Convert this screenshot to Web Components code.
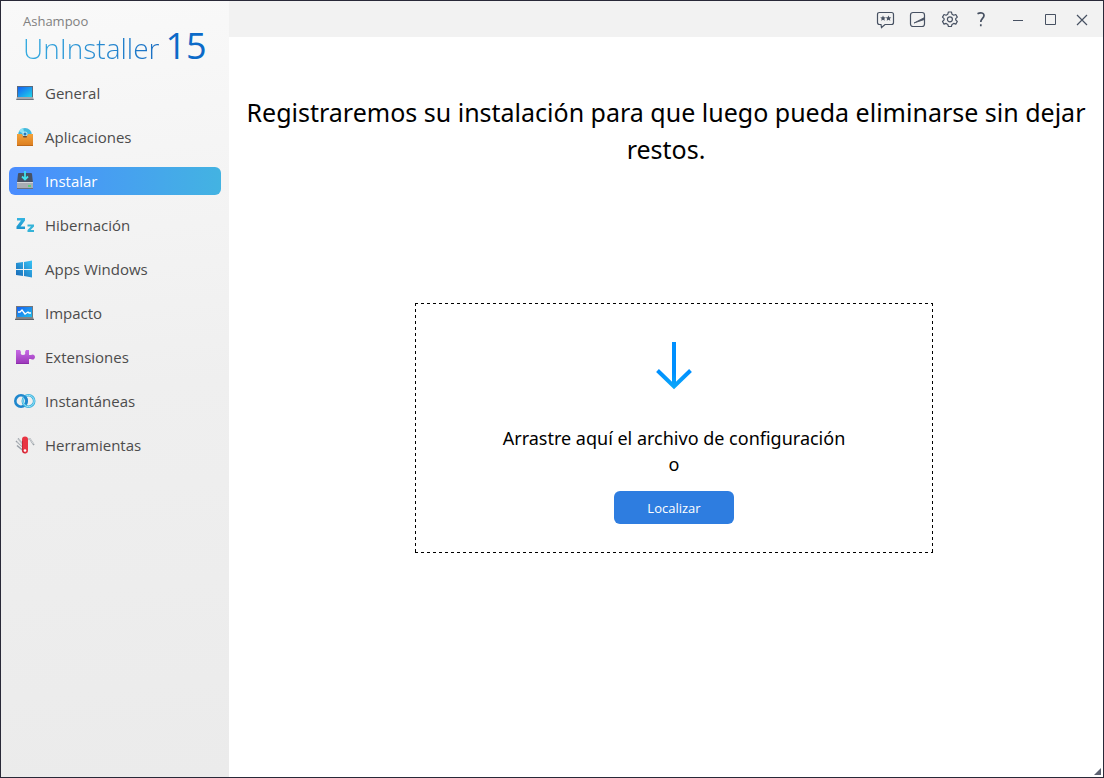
<!DOCTYPE html>
<html lang="es">
<head>
<meta charset="utf-8">
<meta name="viewport" content="width=device-width, initial-scale=1">
<title>Ashampoo UnInstaller 15</title>
<style>
  body {
    margin: 0;
    font-family: "Noto Sans", "Open Sans", sans-serif;
    color: #000;
  }
</style>
</head>
<body>
<app-window>
  <side-bar slot="side">
    <app-logo slot="logo"></app-logo>
    <nav-item icon="laptop">General</nav-item>
    <nav-item icon="bag">Aplicaciones</nav-item>
    <nav-item icon="drive" active>Instalar</nav-item>
    <nav-item icon="sleep">Hibernación</nav-item>
    <nav-item icon="windows">Apps Windows</nav-item>
    <nav-item icon="impact">Impacto</nav-item>
    <nav-item icon="puzzle">Extensiones</nav-item>
    <nav-item icon="rings">Instantáneas</nav-item>
    <nav-item icon="knife">Herramientas</nav-item>
  </side-bar>
  <title-bar slot="title"></title-bar>
  <page-heading>Registraremos su instalación para que luego pueda eliminarse sin dejar restos.</page-heading>
  <drop-zone action="Localizar">
    <span>Arrastre aquí el archivo de configuración</span>
    <span>o</span>
  </drop-zone>
</app-window>

<script>
const icons = {
  laptop: `
    <defs><linearGradient id="g" x2="1" y2="1"><stop stop-color="#1460f5"/><stop offset="1" stop-color="#20d5e8"/></linearGradient></defs>
    <rect x="2" y="3" width="16" height="12" fill="#596b80"/>
    <rect x="3" y="4" width="14" height="10" fill="url(#g)"/>
    <path d="M2 14h16l1 3H1z" fill="#a3a7ae"/><path d="M1 16h18l-1 1H2z" fill="#6d737c"/>`,
  bag: `
    <defs><linearGradient id="g" y2="1" x2="0"><stop stop-color="#f2a33d"/><stop offset="1" stop-color="#dc7d1e"/></linearGradient></defs>
    <circle cx="10" cy="8" r="7" fill="#42b8dc"/><path d="M10 8 4 4a7 7 0 0 1 4-3z" fill="#8de3f3"/>
    <circle cx="10" cy="7" r="2.500" fill="#b8ebf5"/><circle cx="10" cy="7" r="1.500" fill="#2878b6"/>
    <path d="M2 7h5q0 2 3 2t3-2h5v12H2z" fill="url(#g)"/><path d="M2 18h16v1H2z" fill="#be691a"/>
    <rect x="8" y="9" width="4" height="1.500" rx=".7" fill="#6d4b35"/>`,
  drive: `
    <path d="M4 2h12q1 0 1 1l1 9H2l1-9q0-1 1-1z" fill="#475264"/><path d="M2 11h16v6H2z" fill="#a9adb3"/>
    <path d="M2 11h16v1H2z" fill="#d3d5d8"/><path d="M2 17h16v1H2z" fill="#6b717c"/>
    <path d="M13 15h3" stroke="#47da65" stroke-width="1.500"/>
    <path d="M10 0v8M7 5.500l3 3 3-3" fill="none" stroke="#40e1ee" stroke-width="1.800"/>`,
  sleep: `
    <defs><linearGradient id="g" y2="1" x2="0"><stop stop-color="#35b5e2"/><stop offset="1" stop-color="#1b93cc"/></linearGradient></defs>
    <path d="M2 3h8v2.500L5.500 11.500H10V14H1.500v-2.500L6 5.500H2z" fill="url(#g)"/>
    <path d="M12.500 9.500H19v2L15.500 15H19v2h-6.500v-2l3.500-3.500h-3.500z" fill="#35b3d8"/>`,
  windows: `
    <defs><linearGradient id="g" x1="0" y1="1" x2="1" y2="0"><stop stop-color="#1766b5"/><stop offset="1" stop-color="#37c4f6"/></linearGradient></defs>
    <path d="M1 4l7-1v7H1zM9 3l8-1.500V10H9zM1 11h7v6l-7-1zM9 11h8v7.500L9 17z" fill="url(#g)"/>`,
  impact: `
    <defs><linearGradient id="g" x2="1" y2="1"><stop stop-color="#1460f5"/><stop offset="1" stop-color="#20bde8"/></linearGradient></defs>
    <rect x="1" y="3" width="17" height="12" fill="#73777d"/><rect x="2" y="4" width="15" height="10" fill="url(#g)"/>
    <path d="M3 9h2l2-2 3 4 3-2 1 1h2" fill="none" stroke="#fff" stroke-width="1.300"/>
    <path d="M1 14h17l1 3H0z" fill="#808388"/><path d="M0 16h19v1H0z" fill="#5f6267"/>`,
  puzzle: `
    <defs><linearGradient id="g" y2="1" x2="0"><stop stop-color="#c76ae5"/><stop offset="1" stop-color="#9a36b8"/></linearGradient></defs>
    <path d="M1 3h4l1 2q-1 3 2 3t2-3l1-2h3v5h2a2.500 2.500 0 1 1 0 4h-2v5H1z" fill="url(#g)"/>
    <path d="M1 16h13v1H1z" fill="#8c2caa"/>`,
  rings: `
    <circle cx="6" cy="10" r="5.700" fill="none" stroke="#1f87cd" stroke-width="2.600"/>
    <circle cx="13.500" cy="10" r="5.700" fill="none" stroke="#3cb1dd" stroke-width="2.600"/>
    <circle cx="13.500" cy="10" r="5.700" fill="none" stroke="#9be4f8"/>
    <path d="M9 5.200a5.700 5.700 0 0 1 2 7" fill="none" stroke="#1f87cd" stroke-width="2.600"/>`,
  knife: `
    <path d="M8 9 3 3.500M8 12 1 6M8 15.500l-6-5M12 4.500l3-.5 4 6" fill="none" stroke="#9aa0a7" stroke-width="1.600"/>
    <path d="M8 8.500 3.500 4M8 11.500 2 6.500M12 4.500l3-.5 3.500 5" fill="none" stroke="#e6e8ea" stroke-width=".8"/>
    <rect x="7" y="1.500" width="6" height="17" rx="3" fill="#e83543"/>
    <path d="M7.500 6v9q0 3 3 3" fill="none" stroke="#b92233" stroke-width=".7"/><circle cx="10" cy="15.500" r="1.300" fill="#fff"/>`
};

class AppWindow extends HTMLElement {
  constructor() {
    super();
    this.attachShadow({ mode: "open" }).innerHTML = `
    <style>
      :host {
        display: grid;
        grid-template-columns: 228px 1fr;
        grid-template-rows: auto 1fr;
        box-sizing: border-box;
        min-height: 100vh;
        position: relative;
        border: 1px solid #292938;
        background: #fff;
      }
      .side {
        grid-row: 1 / 3;
        display: grid;
      }
      main {
        padding-top: 57px;
      }
      .grip {
        position: absolute;
        right: 2px;
        bottom: 2px;
        width: 7px;
        height: 7px;
        background: #5d6272;
        clip-path: polygon(100% 0, 100% 100%, 0 100%);
      }
    </style>
    <div class="side"><slot name="side"></slot></div>
    <slot name="title"></slot>
    <main><slot></slot></main>
    <div class="grip"></div>
    `;
  }
}

class SideBar extends HTMLElement {
  constructor() {
    super();
    this.attachShadow({ mode: "open" }).innerHTML = `
    <style>
      :host {
        display: block;
        background: linear-gradient(175deg, #f9f9f9, #efefef 50%, #ebebeb);
      }
      nav {
        display: flex;
        flex-direction: column;
        gap: 16px;
        padding: 12px 8px;
      }
    </style>
    <slot name="logo"></slot>
    <nav><slot></slot></nav>
    `;
  }
}

class AppLogo extends HTMLElement {
  constructor() {
    super();
    this.attachShadow({ mode: "open" }).innerHTML = `
    <style>
      :host {
        display: block;
        padding: 12px 0 0 22px;
        font-family: "Open Sans", "Noto Sans", sans-serif;
      }
      .brand {
        font-size: 13px;
        line-height: 16px;
        color: #808080;
      }
      .product {
        display: flex;
        align-items: baseline;
        gap: 6px;
        height: 38px;
      }
      .name {
        font-size: 28px;
        font-weight: 300;
        line-height: 38px;
        color: transparent;
        background: linear-gradient(90deg, #36ace0, #1a6fc4);
        -webkit-background-clip: text;
        background-clip: text;
      }
      .version {
        font-size: 36px;
        line-height: 32px;
        color: #0b6ac8;
      }
    </style>
    <div class="brand">Ashampoo</div>
    <div class="product"><span class="name">UnInstaller</span><span class="version">15</span></div>
    `;
  }
}

class NavItem extends HTMLElement {
  constructor() {
    super();
    this.attachShadow({ mode: "open" });
  }

  connectedCallback() {
    this.shadowRoot.innerHTML = `
    <style>
      :host {
        display: block;
        font-family: "Open Sans", "Noto Sans", sans-serif;
      }
      a {
        display: flex;
        align-items: center;
        gap: 10px;
        height: 28px;
        padding-left: 6px;
        border-radius: 6px;
        font-size: 15px;
        color: #4c4c4c;
        text-decoration: none;
      }
      svg {
        width: 20px;
        height: 20px;
        overflow: visible;
      }
      :host([active]) a {
        color: #fff;
        background: linear-gradient(90deg, #4a8cff, #43b3e2);
      }
    </style>
    <a href="#"><svg viewBox="0 0 20 20" aria-hidden="true">${icons[this.getAttribute("icon")]}</svg><slot></slot></a>
    `;
  }
}

class TitleBar extends HTMLElement {
  constructor() {
    super();
    this.attachShadow({ mode: "open" }).innerHTML = `
    <style>
      :host {
        display: flex;
        justify-content: flex-end;
        align-items: center;
        height: 36px;
        padding-right: 5px;
        background: #f2f2f2;
      }
      button {
        display: grid;
        place-items: center;
        width: 32px;
        height: 32px;
        padding: 0;
        border: 0;
        background: none;
        color: #475162;
      }
      .window {
        display: flex;
        margin-left: 5px;
      }
      svg {
        width: 20px;
        height: 20px;
        fill: none;
        stroke: currentColor;
        stroke-width: 1.2;
      }
    </style>
    <button aria-label="Comentarios"><svg viewBox="0 0 20 20">
      <path d="M4.500 3.500h12q2 0 2 2v8q0 2-2 2H10l-3.500 3-.5-3H4.500q-2 0-2-2v-8q0-2 2-2z"/>
      <path d="M8 6.500l.8 1.800 2 .2-1.500 1.300.5 2L8 10.800l-1.800 1 .5-2-1.500-1.300 2-.2zM13.500 6.500l.8 1.800 2 .2-1.500 1.300.5 2-1.800-1-1.800 1 .5-2-1.500-1.300 2-.2z" fill="currentColor" stroke="none"/>
    </svg></button>
    <button aria-label="Apariencia"><svg viewBox="0 0 20 20">
      <rect x="3.500" y="3.500" width="14" height="14" rx="2.500"/><path d="M17.500 8.500 7 14l10.500-3.500z" fill="currentColor" stroke-width=".8"/>
    </svg></button>
    <button aria-label="Configuración"><svg viewBox="0 0 20 20">
      <path d="M9.400 3h3l.6 2.200 1.700 1 2.100-.7 1.500 2.600-1.600 1.600v1.200l1.600 1.600-1.500 2.600-2.100-.7-1.700 1-.6 2.100h-3l-.6-2.100-1.700-1-2.100.7-1.500-2.600 1.600-1.600V9.700L3.500 8.100 5 5.500l2.100.7 1.700-1z" stroke-linejoin="round"/><circle cx="10.900" cy="10.300" r="2.500"/>
    </svg></button>
    <button aria-label="Ayuda"><svg viewBox="0 0 20 20">
      <path d="M6.500 4.800c3-1.800 6.500-1 6.500 1.700 0 2.900-3.200 3-3.200 6.500M9.800 15.300v2" stroke-width="1.700"/>
    </svg></button>
    <div class="window">
      <button aria-label="Minimizar"><svg viewBox="0 0 20 20"><path d="M5 11.500h10" stroke-width="1"/></svg></button>
      <button aria-label="Maximizar"><svg viewBox="0 0 20 20"><path d="M5.500 5.500h10v10h-10z" stroke-width="1"/></svg></button>
      <button aria-label="Cerrar"><svg viewBox="0 0 20 20"><path d="m5 6 10 10M15 6 5 16" stroke-width="1.200"/></svg></button>
    </div>
    `;
  }
}

class PageHeading extends HTMLElement {
  constructor() {
    super();
    this.attachShadow({ mode: "open" }).innerHTML = `
    <style>
      :host {
        display: block;
        padding: 0 8px;
      }
      h1 {
        margin: 0;
        font-size: 25px;
        font-weight: 400;
        line-height: 37px;
        text-align: center;
      }
    </style>
    <h1><slot></slot></h1>
    `;
  }
}

class DropZone extends HTMLElement {
  constructor() {
    super();
    this.attachShadow({ mode: "open" });
  }

  connectedCallback() {
    this.shadowRoot.innerHTML = `
    <style>
      :host {
        display: flex;
        justify-content: center;
        padding: 135px 0 24px 16px;
      }
      section {
        display: flex;
        flex-direction: column;
        align-items: center;
        box-sizing: border-box;
        width: 100%;
        max-width: 518px;
        padding: 39px 0 29px;
        /* painted dashes, 3px on and 3px off */
        background:
          repeating-linear-gradient(90deg, #000 0 3px, transparent 3px 6px) top / 100% 1px no-repeat,
          repeating-linear-gradient(90deg, #000 0 3px, transparent 3px 6px) bottom / 100% 1px no-repeat,
          repeating-linear-gradient(#000 0 3px, transparent 3px 6px) left / 1px 100% no-repeat,
          repeating-linear-gradient(#000 0 3px, transparent 3px 6px) right / 1px 100% no-repeat;
      }
      svg {
        width: 36px;
        height: 48px;
      }
      .text {
        display: flex;
        flex-direction: column;
        align-items: center;
        margin: 35px 0 14px;
        font-size: 18px;
        line-height: 26px;
      }
      button {
        width: 120px;
        height: 33px;
        border: 0;
        border-radius: 6px;
        background: #2e7de0;
        color: #fff;
        font-family: "Open Sans", "Noto Sans", sans-serif;
        font-size: 13px;
      }
    </style>
    <section>
      <svg viewBox="0 0 36 48" aria-hidden="true">
        <defs><linearGradient id="a" gradientUnits="userSpaceOnUse" x1="0" y1="30" x2="0" y2="48"><stop stop-color="#0090ff"/><stop offset="1" stop-color="#0caaf8"/></linearGradient></defs>
        <path d="M18 0v44M1.500 28.500 18 44.500l16.500-16" fill="none" stroke="url(#a)" stroke-width="4"/>
      </svg>
      <div class="text"><slot></slot></div>
      <button>${this.getAttribute("action")}</button>
    </section>
    `;
  }
}

customElements.define("app-window", AppWindow);
customElements.define("side-bar", SideBar);
customElements.define("app-logo", AppLogo);
customElements.define("nav-item", NavItem);
customElements.define("title-bar", TitleBar);
customElements.define("page-heading", PageHeading);
customElements.define("drop-zone", DropZone);
</script>
</body>
</html>
